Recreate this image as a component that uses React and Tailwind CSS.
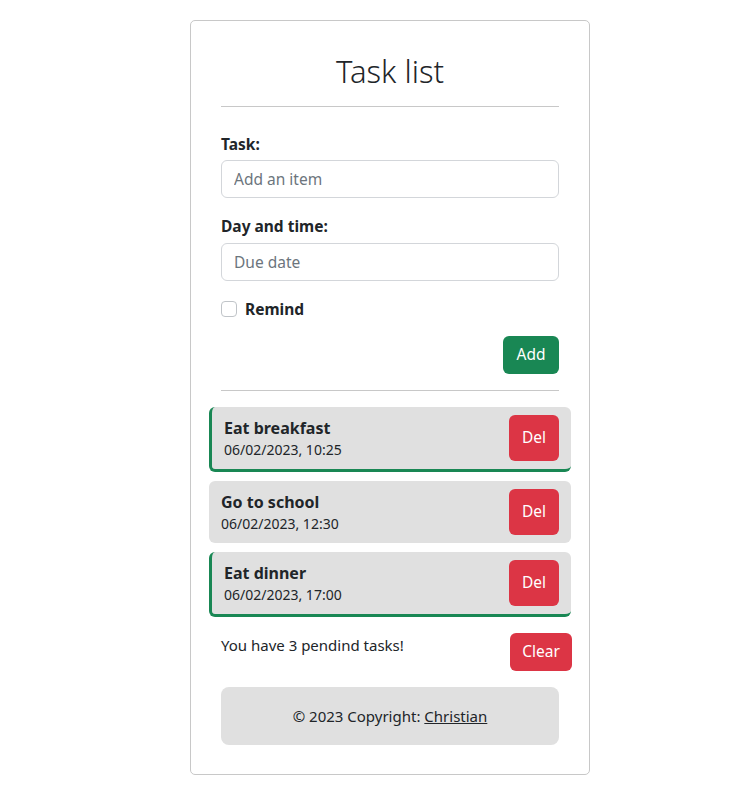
const tasks = [
  { title: "Eat breakfast", date: "06/02/2023, 10:25", remind: true },
  { title: "Go to school", date: "06/02/2023, 12:30", remind: false },
  { title: "Eat dinner", date: "06/02/2023, 17:00", remind: true },
];

function TaskItem({ task }) {
  return (
    <div
      className={
        "mx-[-12px] flex items-center justify-between rounded-md bg-[#e0e0e0] py-2 pr-3 pl-3 " +
        (task.remind ? "border-b-[3px] border-l-[3px] border-[#198754]" : "")
      }
    >
      <div className="flex flex-col">
        <span className="text-[16px] font-bold leading-[24px] text-[#212529]">{task.title}</span>
        <span className="text-[14px] leading-[20px] text-[#212529]">{task.date}</span>
      </div>
      <button className="h-[46px] w-[50px] rounded-md bg-[#dc3545] text-[15.5px] text-white">Del</button>
    </div>
  );
}

export default function App() {
  return (
    <div
      className="flex min-h-screen justify-center bg-white pl-[43px] pt-5"
      style={{ fontFamily: '"Noto Sans", sans-serif' }}
    >
      <div className="h-fit w-[400px] rounded-[5px] border border-[#c8c8c8] px-[30px] pb-[29px] pt-[30px] text-[15px] text-[#212529]">
        <h1 className="text-center text-[31px] font-light leading-[40px]">Task list</h1>
        <hr className="mt-[15px] border-[#c8c8c8]" />

        <form className="mt-[25px]" onSubmit={(e) => e.preventDefault()}>
          <label className="mb-1 block text-[15.5px] font-bold leading-6">Task:</label>
          <input
            className="h-[38px] w-full rounded-md border border-[#d3d6da] px-3 text-[15.5px] placeholder:text-[#6c757d] outline-none"
            placeholder="Add an item"
          />
          <label className="mb-[5px] mt-4 block text-[15.5px] font-bold leading-6">Day and time:</label>
          <input
            className="h-[38px] w-full rounded-md border border-[#d3d6da] px-3 text-[15.5px] placeholder:text-[#6c757d] outline-none"
            placeholder="Due date"
          />
          <div className="mt-4 flex items-center gap-2">
            <span className="h-4 w-4 rounded-[4px] border border-[#c0c4c8] bg-white" />
            <span className="text-[15.5px] font-bold leading-6">Remind</span>
          </div>
          <div className="mt-[15px] flex justify-end">
            <button className="h-[38px] w-[56px] rounded-md bg-[#198754] text-[15.5px] text-white">Add</button>
          </div>
        </form>

        <hr className="mt-4 border-[#c8c8c8]" />

        <div className="mt-4 flex flex-col gap-[9px]">
          {tasks.map((t) => (
            <TaskItem key={t.title} task={t} />
          ))}
        </div>

        <div className="mt-4 flex items-start justify-between">
          <p className="text-[15px] leading-6">You have 3 pendind tasks!</p>
          <button className="mr-[-13px] h-[38px] w-[62px] rounded-md bg-[#dc3545] text-[15.5px] text-white">Clear</button>
        </div>

        <footer className="mt-4 rounded-lg bg-[#e0e0e0] py-[17px] text-center text-[15px] leading-6">
          © 2023 Copyright: <a className="underline" href="#">Christian</a>
        </footer>
      </div>
    </div>
  );
}
